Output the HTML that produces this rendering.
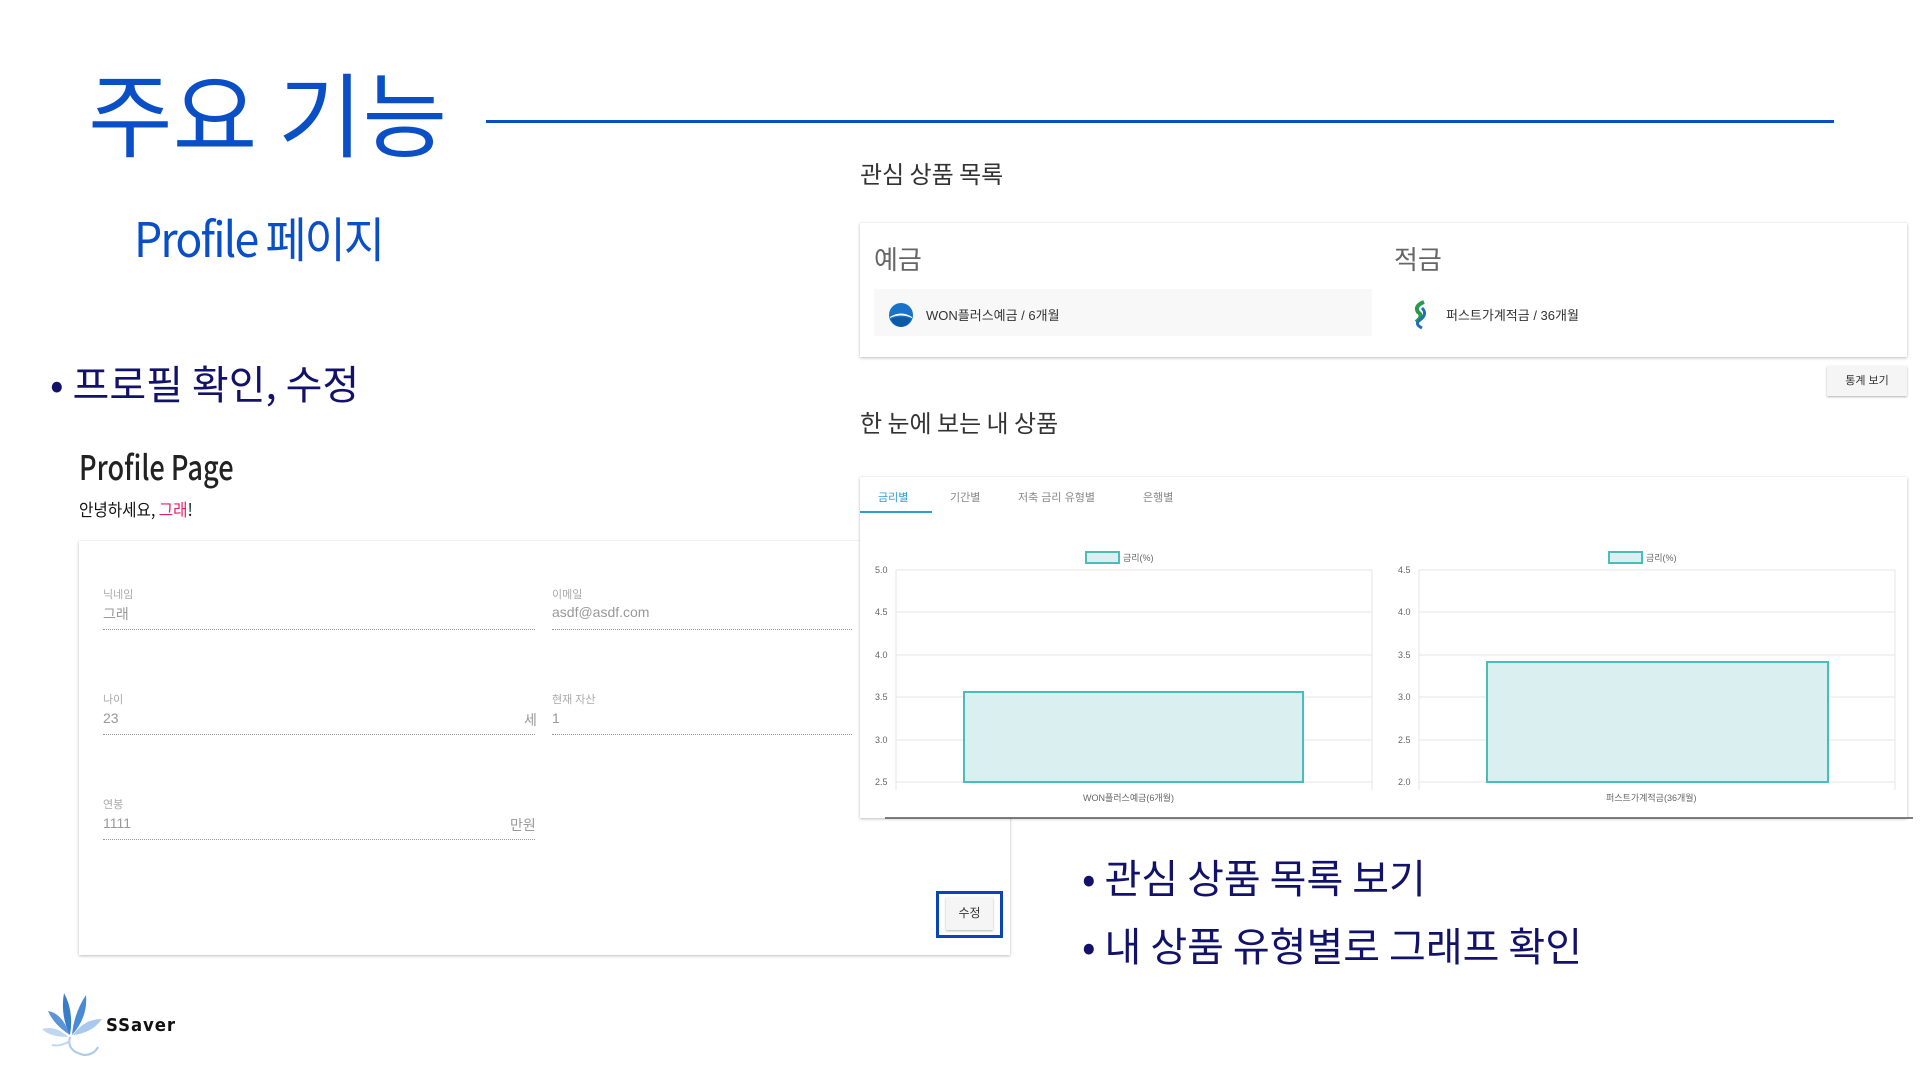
<!DOCTYPE html>
<html><head><meta charset="utf-8"><style>
*{margin:0;padding:0;box-sizing:border-box}
body{width:1920px;height:1080px;background:#fff;position:relative;overflow:hidden;font-family:"Liberation Sans","Noto Sans CJK KR",sans-serif}
.a{position:absolute;white-space:nowrap}
.card{position:absolute;background:#fff;box-shadow:0 1px 3px rgba(0,0,0,.25),0 0 1px rgba(0,0,0,.08)}
.lbl{font-size:11px;color:#aaa}
.val{font-size:14px;color:#999}
.ul{position:absolute;height:0;border-bottom:1px dotted #999}
</style></head><body>

<div class="a" style="left:88px;top:56px;font-size:92px;color:#0b4fc6;font-family:'Noto Sans CJK KR',sans-serif;letter-spacing:0px;line-height:1.2">주요 기능</div>
<div class="a" style="left:486px;top:120px;width:1348px;height:3px;background:#0b4fc6"></div>

<div class="a" style="left:134px;top:208px;font-size:48px;color:#0b4fc6;font-family:'Noto Sans CJK KR',sans-serif;line-height:1.2;letter-spacing:-2px;transform:scaleX(.93);transform-origin:left">Profile 페이지</div>

<div class="a" style="left:50px;top:356px;font-size:40px;color:#12126a;font-family:'Noto Sans CJK KR',sans-serif;line-height:1.3">• 프로필 확인, 수정</div>

<div class="a" style="left:79px;top:444px;font-size:34px;color:#222;font-family:'Noto Sans CJK KR',sans-serif;font-weight:500;transform:scaleX(.8);transform-origin:left;line-height:1.3">Profile Page</div>
<div class="a" style="left:79px;top:498px;font-size:17px;color:#111;font-family:'Noto Sans CJK KR',sans-serif;line-height:1.3;transform:scaleX(.92);transform-origin:left">안녕하세요, <span style="color:#e91e63">그래</span>!</div>

<div class="card" style="left:79px;top:541px;width:931px;height:414px"></div>
<div class="a lbl" style="left:103px;top:586px">닉네임</div>
<div class="a val" style="left:103px;top:604px">그래</div>
<div class="ul" style="left:103px;top:629px;width:432px"></div>
<div class="a lbl" style="left:552px;top:586px">이메일</div>
<div class="a val" style="left:552px;top:604px">asdf@asdf.com</div>
<div class="ul" style="left:552px;top:629px;width:300px"></div>
<div class="a lbl" style="left:103px;top:691px">나이</div>
<div class="a val" style="left:103px;top:710px">23</div>
<div class="a val" style="left:524px;top:710px">세</div>
<div class="ul" style="left:103px;top:734px;width:432px"></div>
<div class="a lbl" style="left:552px;top:691px">현재 자산</div>
<div class="a val" style="left:552px;top:710px">1</div>
<div class="ul" style="left:552px;top:734px;width:300px"></div>
<div class="a lbl" style="left:103px;top:796px">연봉</div>
<div class="a val" style="left:103px;top:815px">1111</div>
<div class="a val" style="left:510px;top:815px">만원</div>
<div class="ul" style="left:103px;top:839px;width:432px"></div>
<div class="a" style="left:936px;top:891px;width:67px;height:47px;border:3px solid #0b43b8"></div>
<div class="a" style="left:946px;top:897px;width:47px;height:33px;background:#f5f5f5;box-shadow:0 1px 2px rgba(0,0,0,.3);font-size:12px;color:#333;text-align:center;line-height:33px">수정</div>

<!-- right panel -->
<div class="a" style="left:860px;top:155px;font-size:24px;color:#333;font-family:'Noto Sans CJK KR',sans-serif">관심 상품 목록</div>
<div class="card" style="left:860px;top:223px;width:1047px;height:134px"></div>
<div class="a" style="left:874px;top:240px;font-size:26px;color:#666;font-family:'Noto Sans CJK KR',sans-serif">예금</div>
<div class="a" style="left:1394px;top:240px;font-size:26px;color:#666;font-family:'Noto Sans CJK KR',sans-serif">적금</div>
<div class="a" style="left:874px;top:289px;width:498px;height:47px;background:#f8f8f8"></div>
<svg class="a" style="left:888px;top:302px" width="26" height="26" viewBox="0 0 26 26"><circle cx="13" cy="13" r="12" fill="#1a73c8"/><path d="M2 15 Q13 8 24 15 L24 16 Q13 11 2 16Z" fill="#fff"/><path d="M3 17 Q13 13 23 17 Q20 24 13 25 Q6 24 3 17Z" fill="#0a5aa8"/></svg>
<div class="a" style="left:926px;top:305px;font-size:13px;color:#333">WON플러스예금 / 6개월</div>
<svg class="a" style="left:1410px;top:300px" width="20" height="30" viewBox="0 0 20 30"><path d="M14 2 Q4 6 8 12 Q14 16 6 22" stroke="#2a9a4a" stroke-width="4" fill="none"/><path d="M12 8 Q18 14 10 20 Q4 24 12 28" stroke="#1e6fc0" stroke-width="3" fill="none"/></svg>
<div class="a" style="left:1446px;top:305px;font-size:13px;color:#333">퍼스트가계적금 / 36개월</div>
<div class="a" style="left:1827px;top:366px;width:80px;height:30px;background:#f5f5f5;box-shadow:0 1px 2px rgba(0,0,0,.3);font-size:11px;color:#333;text-align:center;line-height:30px">통계 보기</div>

<div class="a" style="left:860px;top:404px;font-size:24px;color:#333;font-family:'Noto Sans CJK KR',sans-serif">한 눈에 보는 내 상품</div>
<div class="card" style="left:860px;top:477px;width:1047px;height:341px"></div>
<div class="a" style="left:878px;top:489px;font-size:11px;color:#2a9fd6">금리별</div>
<div class="a" style="left:860px;top:511px;width:72px;height:2px;background:#2a9fd6"></div>
<div class="a" style="left:950px;top:489px;font-size:11px;color:#888">기간별</div>
<div class="a" style="left:1018px;top:489px;font-size:11px;color:#888">저축 금리 유형별</div>
<div class="a" style="left:1143px;top:489px;font-size:11px;color:#888">은행별</div>

<svg class="a" style="left:0;top:0" width="1920" height="1080" font-family="Liberation Sans" font-size="9" fill="#666">
<g stroke="#e6e6e6" stroke-width="1">
<line x1="896" y1="570" x2="1372" y2="570"/><line x1="896" y1="612" x2="1372" y2="612"/><line x1="896" y1="655" x2="1372" y2="655"/><line x1="896" y1="697" x2="1372" y2="697"/><line x1="896" y1="740" x2="1372" y2="740"/><line x1="896" y1="782" x2="1372" y2="782"/>
<line x1="896" y1="570" x2="896" y2="790"/><line x1="1372" y1="570" x2="1372" y2="790"/>
<line x1="1419" y1="570" x2="1895" y2="570"/><line x1="1419" y1="612" x2="1895" y2="612"/><line x1="1419" y1="655" x2="1895" y2="655"/><line x1="1419" y1="697" x2="1895" y2="697"/><line x1="1419" y1="740" x2="1895" y2="740"/><line x1="1419" y1="782" x2="1895" y2="782"/>
<line x1="1419" y1="570" x2="1419" y2="790"/><line x1="1895" y1="570" x2="1895" y2="790"/>
</g>
<text x="875" y="573">5.0</text><text x="875" y="615">4.5</text><text x="875" y="658">4.0</text><text x="875" y="700">3.5</text><text x="875" y="743">3.0</text><text x="875" y="785">2.5</text>
<text x="1398" y="573">4.5</text><text x="1398" y="615">4.0</text><text x="1398" y="658">3.5</text><text x="1398" y="700">3.0</text><text x="1398" y="743">2.5</text><text x="1398" y="785">2.0</text>
<rect x="964" y="692" width="339" height="90" fill="#daf0f0" stroke="#4bbdb8" stroke-width="2"/>
<rect x="1487" y="662" width="341" height="120" fill="#daf0f0" stroke="#4bbdb8" stroke-width="2"/>
<rect x="1086" y="552" width="33" height="11" fill="#daf0f0" stroke="#4bbdb8" stroke-width="2"/><text x="1123" y="561">금리(%)</text>
<rect x="1609" y="552" width="33" height="11" fill="#daf0f0" stroke="#4bbdb8" stroke-width="2"/><text x="1646" y="561">금리(%)</text>
<text x="1083" y="801">WON플러스예금(6개월)</text>
<text x="1606" y="801">퍼스트가계적금(36개월)</text>
<line x1="885" y1="818" x2="1913" y2="818" stroke="#555" stroke-width="1.5"/>
</svg>

<div class="a" style="left:1082px;top:850px;font-size:40px;color:#12126a;font-family:'Noto Sans CJK KR',sans-serif;line-height:1.3">• 관심 상품 목록 보기</div>
<div class="a" style="left:1082px;top:918px;font-size:40px;color:#12126a;font-family:'Noto Sans CJK KR',sans-serif;line-height:1.3">• 내 상품 유형별로 그래프 확인</div>

<svg class="a" style="left:40px;top:985px" width="80" height="75" viewBox="0 0 80 75">
<path d="M30 50 Q14 40 8 26 Q22 28 30 50Z" fill="#5b95d8"/>
<path d="M30 50 Q20 30 24 8 Q34 26 30 50Z" fill="#3a7ccc"/>
<path d="M32 50 Q34 28 46 10 Q48 32 32 50Z" fill="#4a8ad4"/>
<path d="M33 50 Q44 34 62 34 Q52 48 33 50Z" fill="#a9c8ee"/>
<path d="M28 52 Q10 52 2 44 Q16 40 28 52Z" fill="#c0d6f2"/>
<path d="M30 52 Q26 66 44 70 Q54 70 58 62" stroke="#a9c8ee" stroke-width="2" fill="none"/>
<path d="M30 56 Q20 62 12 60" stroke="#c0d6f2" stroke-width="2" fill="none"/>
</svg>
<div class="a" style="left:106px;top:1015px;font-size:18px;font-weight:bold;color:#111;font-family:'DejaVu Sans',sans-serif;letter-spacing:1px;transform:scaleX(.92);transform-origin:left">SSaver</div>
</body></html>
